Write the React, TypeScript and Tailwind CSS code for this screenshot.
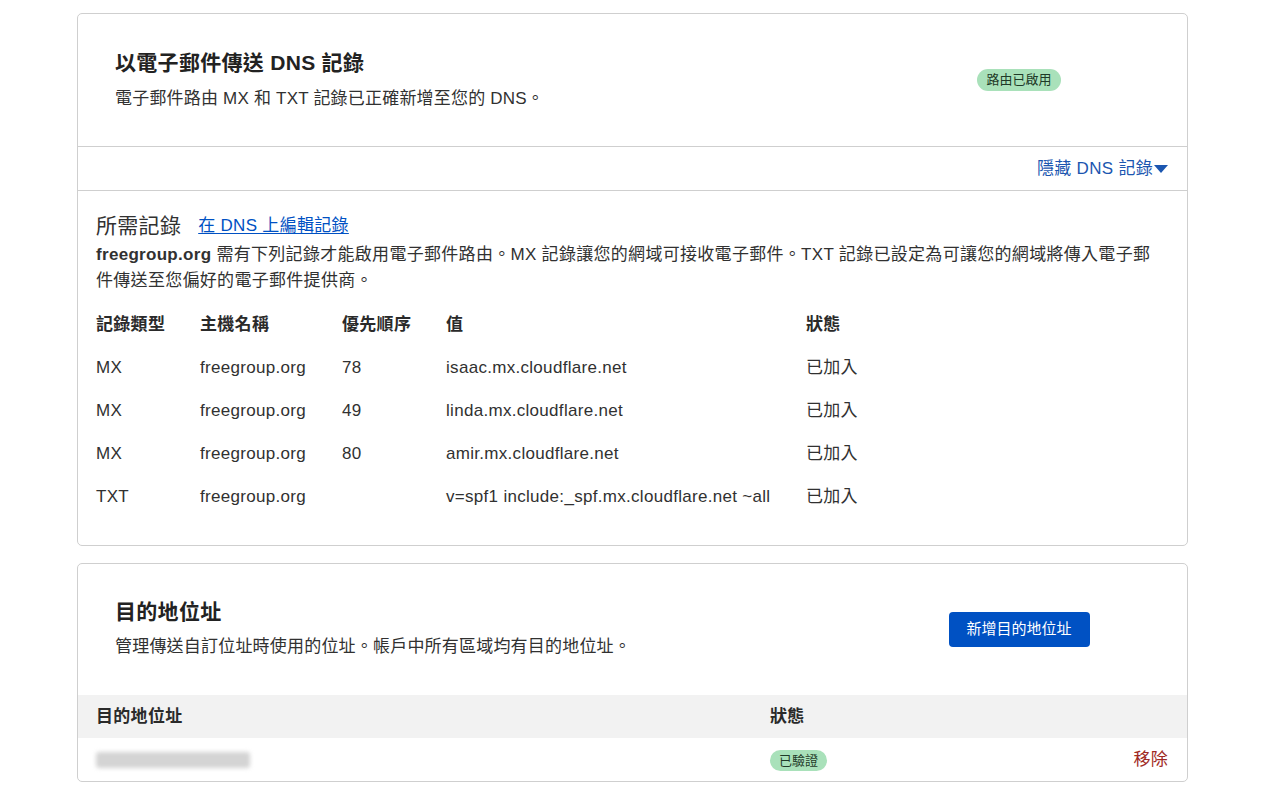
import React from "react";

const font = { fontFamily: '"Liberation Sans", "Noto Sans CJK TC", sans-serif' };

const rows = [
  ["MX", "freegroup.org", "78", "isaac.mx.cloudflare.net", "已加入"],
  ["MX", "freegroup.org", "49", "linda.mx.cloudflare.net", "已加入"],
  ["MX", "freegroup.org", "80", "amir.mx.cloudflare.net", "已加入"],
  ["TXT", "freegroup.org", "", "v=spf1 include:_spf.mx.cloudflare.net ~all", "已加入"],
];

export default function App() {
  return (
    <div className="min-h-[802px] bg-white text-[#313131] tracking-[0.3px]" style={font}>
      <div className="pt-[13px] pl-[77px] w-[1188px] flex flex-col gap-[17px]">
        {/* Card 1 */}
        <div className="border border-[#cfcfcf] rounded-[5px] bg-white">
          <div className="flex items-center h-[133px] border-b border-[#cfcfcf]">
            <div className="flex-1 pl-[37px]">
              <div className="text-[21px] leading-[28px] font-semibold text-[#222]">以電子郵件傳送 DNS 記錄</div>
              <div className="text-[17px] leading-[24px] mt-[10px] text-[#313131] tracking-[0.2px]">電子郵件路由 MX 和 TXT 記錄已正確新增至您的 DNS。</div>
            </div>
            <div className="w-[336px] flex justify-center">
              <span className="inline-flex items-center h-[22px] px-[9px] rounded-full bg-[#a9e1ba] text-[13px] tracking-normal text-[#1f3a28]">路由已啟用</span>
            </div>
          </div>
          <div className="h-[44px] flex items-center justify-end pr-[19px] border-b border-[#cfcfcf]">
            <span className="text-[17px] text-[#1b56b0] flex items-center pt-[1px]">
              隱藏 DNS 記錄
              <svg width="14" height="9" viewBox="0 0 14 9" className="ml-[1px]"><path d="M0 0 H14 L7 8 Z" fill="#1b56b0" /></svg>
            </span>
          </div>
          <div className="pl-[18px] pr-[19px] pt-[21px] pb-[27px]">
            <div className="flex items-center h-[28px]">
              <span className="text-[21px] text-[#313131]">所需記錄</span>
              <a className="ml-[17px] text-[17px] text-[#0051c3] underline underline-offset-2">在 DNS 上編輯記錄</a>
            </div>
            <p className="mt-[2px] text-[17px] leading-[26px] text-[#313131] whitespace-nowrap">
              <span className="font-bold">freegroup.org</span> 需有下列記錄才能啟用電子郵件路由。MX 記錄讓您的網域可接收電子郵件。TXT 記錄已設定為可讓您的網域將傳入電子郵
              <br />
              件傳送至您偏好的電子郵件提供商。
            </p>
            <div className="mt-[9px] text-[17px]">
              <div className="grid grid-cols-[104px_142px_104px_360px_1fr] h-[43px] items-center font-semibold text-[#2a2a2a]">
                <div>記錄類型</div>
                <div>主機名稱</div>
                <div>優先順序</div>
                <div>值</div>
                <div>狀態</div>
              </div>
              {rows.map((r, i) => (
                <div key={i} className="grid grid-cols-[104px_142px_104px_360px_1fr] h-[43px] items-center text-[#313131]">
                  {r.map((c, j) => (
                    <div key={j} className="whitespace-nowrap">{c}</div>
                  ))}
                </div>
              ))}
            </div>
          </div>
        </div>

        {/* Card 2 */}
        <div className="border border-[#cfcfcf] rounded-[5px] bg-white overflow-hidden">
          <div className="flex items-center h-[131px]">
            <div className="flex-1 pl-[37px] pb-[2px]">
              <div className="text-[21px] leading-[28px] font-semibold text-[#222]">目的地位址</div>
              <div className="text-[17px] leading-[24px] mt-[9px] text-[#313131] tracking-[0.2px]">管理傳送自訂位址時使用的位址。帳戶中所有區域均有目的地位址。</div>
            </div>
            <div className="w-[336px] flex justify-center">
              <button className="h-[35px] w-[141px] rounded-[4px] bg-[#0051c3] text-white text-[15px] tracking-normal">新增目的地位址</button>
            </div>
          </div>
          <div className="h-[43px] bg-[#f2f2f2] grid grid-cols-[674px_1fr] items-center pl-[18px] font-semibold text-[17px] text-[#2a2a2a]">
            <div>目的地位址</div>
            <div>狀態</div>
          </div>
          <div className="h-[43px] grid grid-cols-[674px_1fr_auto] items-center pl-[18px] pr-[19px]">
            <div>
              <div className="w-[154px] h-[16px] bg-[#d4d4d4] rounded-[3px] blur-[2px]"></div>
            </div>
            <div>
              <span className="inline-flex items-center h-[21px] px-[9px] rounded-full bg-[#a9e1ba] text-[13px] tracking-normal text-[#1f3a28]">已驗證</span>
            </div>
            <div className="text-[17px] text-[#9f2a24]">移除</div>
          </div>
        </div>
      </div>
    </div>
  );
}
